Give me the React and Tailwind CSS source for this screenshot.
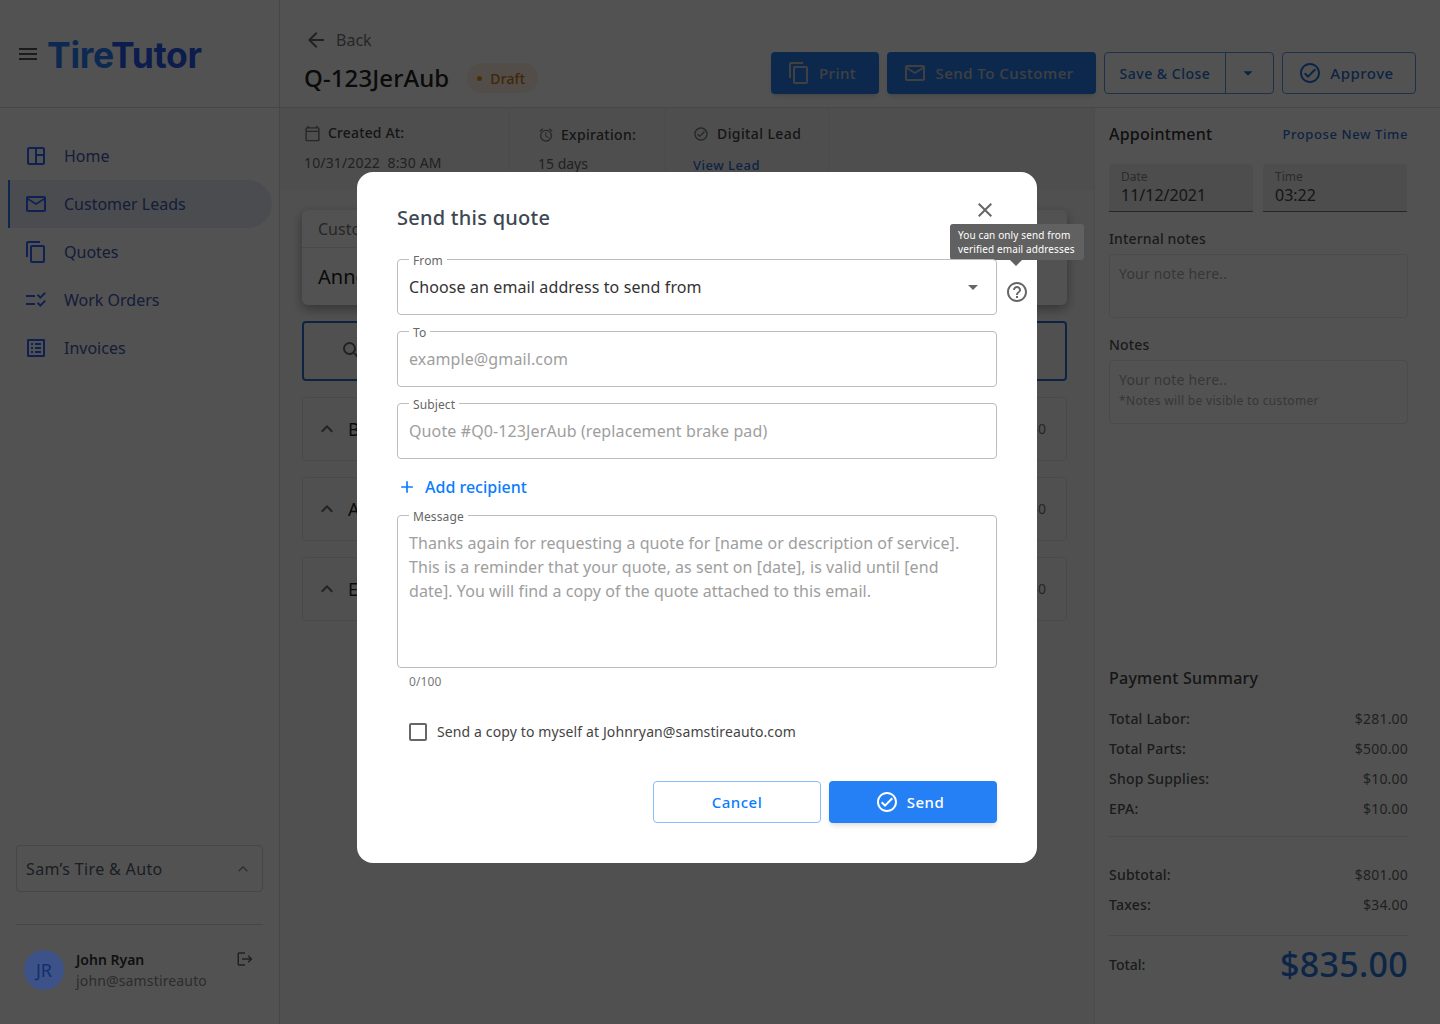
import React from 'react';
import {
  MdMenu, MdOutlineSpaceDashboard, MdMailOutline, MdContentCopy, MdChecklistRtl, MdOutlineListAlt,
  MdExpandLess, MdLogout, MdArrowBack, MdOutlineCheckCircle, MdArrowDropDown, MdOutlineCalendarToday,
  MdOutlineAlarm, MdSearch, MdClose, MdHelpOutline, MdAdd,
} from 'react-icons/md';

const NAV = [
  { label: 'Home', Icon: MdOutlineSpaceDashboard },
  { label: 'Customer Leads', Icon: MdMailOutline, active: true },
  { label: 'Quotes', Icon: MdContentCopy },
  { label: 'Work Orders', Icon: MdChecklistRtl },
  { label: 'Invoices', Icon: MdOutlineListAlt },
];

const CHARGES = [['Total Labor:', '$281.00'], ['Total Parts:', '$500.00'], ['Shop Supplies:', '$10.00'], ['EPA:', '$10.00']];
const TOTALS = [['Subtotal:', '$801.00'], ['Taxes:', '$34.00']];

function Sidebar() {
  return (
    <aside className="w-[280px] shrink-0 border-r border-[#d8d8d8] flex flex-col">
      <div className="h-[108px] shrink-0 border-b border-[#d8d8d8] flex items-center pl-[16px] gap-[7px]">
        <MdMenu size={24} className="text-[#555]" />
        <div className="mt-[4px] font-['Inter',sans-serif] font-bold text-[35.5px] tracking-[-0.3px] leading-none text-[#2a80ff]">
          Tire<span className="text-[#2458f0]">Tutor</span>
        </div>
      </div>
      <nav className="mt-[24px] flex flex-col">
        {NAV.map(({ label, Icon, active }) => (
          <div key={label} className={`ml-[8px] mr-[7px] h-[48px] flex items-center pl-[14px] gap-[16px] text-[16px] text-[#3f5ab0] ${active ? 'bg-[#e9edf5] border-l-2 border-[#2a78f0] rounded-r-full' : 'border-l-2 border-transparent'}`}>
            <Icon size={24} className="text-[#2d68ff]" />
            {label}
          </div>
        ))}
      </nav>
      <div className="mt-auto px-[16px]">
        <div className="h-[47px] border border-[#d8d8d8] rounded flex items-center justify-between px-[9px] text-[16px] tracking-[0.35px] text-[#52606d]">
          Sam’s Tire &amp; Auto
          <MdExpandLess size={20} className="text-[#9a9a9a]" />
        </div>
        <div className="mt-[32px] border-t border-[#d8d8d8] h-[100px] flex items-start pt-[25px] pl-[8px] pr-[9px]">
          <div className="relative z-10 w-[40px] h-[40px] rounded-full bg-[#3d5288] flex items-center justify-center text-[18px] text-[#132f6c]">JR</div>
          <div className="ml-[12px] flex-1">
            <div className="text-[14px] leading-[20px] font-semibold text-[#333]">John Ryan</div>
            <div className="text-[14px] leading-[20px] mt-[1px] tracking-[0.15px] text-[#8a8a8a]">john@samstireauto</div>
          </div>
          <MdLogout size={18} className="text-[#666]" />
        </div>
      </div>
    </aside>
  );
}

function Header() {
  return (
    <header className="h-[108px] shrink-0 border-b border-[#e0e0e0] flex justify-between pl-[24px] pr-[24px]">
      <div>
        <div className="mt-[28px] flex items-center gap-[8px] text-[16px] leading-[24px] text-[#777]">
          <MdArrowBack size={24} className="text-[#666]" /> Back
        </div>
        <div className="mt-[8px] flex items-center gap-[18px]">
          <h1 className="text-[24px] leading-[36px] font-medium tracking-[0.1px] text-[#222]">Q-123JerAub</h1>
          <span className="h-[30px] w-[71px] pl-[10px] rounded-full bg-[#fdf0df] flex items-center gap-[8px] text-[14px] font-medium tracking-[0.1px] text-[#c77a1a]">
            <span className="w-[5px] h-[5px] rounded-full bg-[#e8930f]" /> Draft
          </span>
        </div>
      </div>
      <div className="mt-[52px] flex gap-[8px] h-[42px] text-[15px] font-medium tracking-[0.5px]">
        <button className="w-[108px] pr-[7px] rounded bg-[#2680f0] shadow-md flex items-center justify-center gap-[8px] text-[#c8c8c8]">
          <MdContentCopy size={24} /> Print
        </button>
        <button className="w-[209px] pr-[6px] rounded bg-[#2680f0] shadow-md flex items-center justify-center gap-[8px] text-[#c8c8c8]">
          <MdMailOutline size={24} /> Send To Customer
        </button>
        <div className="w-[170px] rounded border border-[#5f9ae8] flex text-[#2a6fd0] text-[14px]">
          <div className="w-[121px] border-r border-[#5f9ae8] flex items-center justify-center">Save &amp; Close</div>
          <div className="flex-1 pr-[3px] flex items-center justify-center"><MdArrowDropDown size={22} /></div>
        </div>
        <button className="w-[134px] pr-[6px] rounded border border-[#5f9ae8] flex items-center justify-center gap-[8px] text-[#2a6fd0]">
          <MdOutlineCheckCircle size={24} /> Approve
        </button>
      </div>
    </header>
  );
}

function InfoStrip() {
  return (
    <div className="h-[82px] bg-[#f3f3f3] flex text-[14px] text-[#666] overflow-hidden">
      <div className="w-[230px] pl-[24px] pt-[14px] border-r border-[#e6e6e6]">
        <div className="flex items-center gap-[7px] font-medium tracking-[0.15px] text-[#444] leading-[22px]"><MdOutlineCalendarToday size={17} className="text-[#777]" /> Created At:</div>
        <div className="mt-[8px] leading-[22px] tracking-[0.15px]">10/31/2022&nbsp; 8:30 AM</div>
      </div>
      <div className="w-[156px] pl-[28px] pt-[16px] border-r border-[#e6e6e6]">
        <div className="flex items-center gap-[7px] font-medium tracking-[0.3px] text-[#444] leading-[22px]"><MdOutlineAlarm size={16} className="text-[#777]" /> Expiration:</div>
        <div className="mt-[7px] leading-[22px]">15 days</div>
      </div>
      <div className="w-[163px] pl-[27px] pt-[15px] border-r border-[#e6e6e6]">
        <div className="flex items-center gap-[8px] font-medium tracking-[0.4px] text-[#444] leading-[22px]"><MdOutlineCheckCircle size={16} className="text-[#777]" /> Digital Lead</div>
        <div className="mt-[9px] leading-[22px] text-[13px] font-medium tracking-[0.5px] text-[#2a6fd0]">View Lead</div>
      </div>
    </div>
  );
}

function Middle() {
  return (
    <div className="w-[814px] shrink-0 bg-[#f9f9f9]">
      <InfoStrip />
      <div className="pl-[22px] pr-[27px] pt-[20px] flex flex-col gap-[16px]">
        <div className="h-[95px] rounded-md bg-white shadow-[0_4px_12px_rgba(0,0,0,0.35)]">
          <div className="h-[38px] border-b border-[#e4e4e4] pl-[16px] flex items-center text-[16px] text-[#777]">Customer</div>
          <div className="h-[57px] pl-[16px] flex items-center text-[20px] text-[#222]">Anne</div>
        </div>
        <div className="h-[60px] rounded border-2 border-[#2a6fd0] pl-[36px] flex items-center"><MdSearch size={24} className="text-[#666]" /></div>
        {['Brakes', 'Axle', 'Engine'].map(name => (
          <div key={name} className="h-[64px] rounded border border-[#e4e4e4] pl-[12px] pr-[20px] flex items-center justify-between text-[14px] text-[#777]">
            <div className="flex items-center gap-[9px] text-[18px] text-[#222]">
              <MdExpandLess size={24} className="text-[#666]" /> {name}
            </div>
            <span className="mb-[2px]">$0</span>
          </div>
        ))}
      </div>
    </div>
  );
}

function RightPanel() {
  return (
    <div className="flex-1 border-l border-[#ececec] pl-[14px] pr-[32px] flex flex-col text-[#666]">
      <div className="mt-[14px] flex items-center justify-between h-[24px]">
        <h2 className="text-[16px] font-medium tracking-[0.2px] text-[#333]">Appointment</h2>
        <a className="mt-[2px] text-[13px] font-medium tracking-[0.6px] text-[#2a6fd0]">Propose New Time</a>
      </div>
      <div className="mt-[18px] flex gap-[10px]">
        {[['Date', '11/12/2021'], ['Time', '03:22']].map(([label, value]) => (
          <div key={label} className="w-[144px] h-[48px] rounded-t bg-[#eeeeee] border-b border-[#777] pl-[12px] pt-[6px]">
            <div className="text-[12px] leading-[14px] text-[#888]">{label}</div>
            <div className="text-[16px] leading-[22px] text-[#444]">{value}</div>
          </div>
        ))}
      </div>
      <div className="mt-[17px] text-[14px] leading-[20px] font-medium tracking-[0.15px] text-[#555]">Internal notes</div>
      <div className="mt-[5px] h-[64px] rounded border border-[#e8e8e8] pl-[9px] pt-[8px] text-[14px] leading-[22px] tracking-[0.2px] text-[#aaa]">Your note here..</div>
      <div className="mt-[17px] text-[14px] leading-[20px] font-medium tracking-[0.15px] text-[#555]">Notes</div>
      <div className="mt-[5px] h-[64px] rounded border border-[#e8e8e8] pl-[9px] pt-[8px] text-[#aaa]">
        <div className="text-[14px] leading-[22px] tracking-[0.2px]">Your note here..</div>
        <div className="mt-[2px] text-[12px] leading-[16px] tracking-[0.33px]">*Notes will be visible to customer</div>
      </div>
      <div className="mt-auto pb-[38px]">
        <h2 className="text-[16px] leading-[24px] font-medium tracking-[0.25px] text-[#444]">Payment Summary</h2>
        <div className="mt-[18px] flex flex-col gap-[8px] text-[14px] leading-[22px] tracking-[0.2px]">
          {CHARGES.map(([label, value]) => (
            <div key={label} className="flex justify-between"><span className="font-medium text-[#555]">{label}</span><span>{value}</span></div>
          ))}
        </div>
        <div className="mt-[16px] pt-[27px] border-t border-[#e4e4e4] flex flex-col gap-[8px] text-[14px] leading-[22px] tracking-[0.2px]">
          {TOTALS.map(([label, value]) => (
            <div key={label} className="flex justify-between"><span className="font-medium text-[#555]">{label}</span><span>{value}</span></div>
          ))}
        </div>
        <div className="mt-[19px] pt-[6px] border-t border-[#e4e4e4] flex justify-between items-center">
          <span className="text-[14px] font-medium text-[#555]">Total:</span>
          <span className="text-[34px] leading-[44px] font-medium tracking-[0.3px] text-[#2a78e0]">$835.00</span>
        </div>
      </div>
    </div>
  );
}

function Field({ label, className, children }) {
  return (
    <div className={`relative w-[600px] rounded border border-[#bdbdbd] px-[11px] text-[16px] tracking-[0.11px] ${className}`}>
      <span className="absolute -top-[5px] left-[11px] bg-white px-[4px] text-[12px] leading-[12px] text-[#666]">{label}</span>
      {children}
    </div>
  );
}

function SendModal() {
  return (
    <div className="absolute inset-0 bg-black/[0.68] pl-[357px] pt-[172px]">
      <div className="relative w-[680px] h-[691px] rounded-2xl bg-white pl-[40px] pt-[30px]">
        <h2 className="text-[20px] leading-[32px] font-medium tracking-[0.25px] text-[#3d4852]">Send this quote</h2>
        <MdClose size={24} className="absolute top-[26px] left-[616px] text-[#666]" />

        <div className="absolute left-[593px] top-[52px] w-[134px] h-[36px] rounded-[3px] bg-[#616161] px-[8px] pt-[4px] text-[10px] leading-[14px] tracking-[0.12px] text-white whitespace-nowrap">
          You can only send from<br />verified email addresses
          <div className="absolute left-[60px] top-[36px] w-0 h-0 border-x-[6px] border-x-transparent border-t-[6px] border-t-[#616161]" />
        </div>
        <MdHelpOutline size={24} className="absolute left-[648px] top-[108px] text-[#666]" />

        <div className="mt-[25px] flex flex-col gap-[16px]">
          <Field label="From" className="h-[56px] flex items-center justify-between text-[#333]">
            <span>Choose an email address to send from</span>
            <MdArrowDropDown size={24} className="text-[#666]" />
          </Field>
          <Field label="To" className="h-[56px] flex items-center text-[#9e9e9e]"><span>example@gmail.com</span></Field>
          <Field label="Subject" className="h-[56px] flex items-center text-[#9e9e9e]"><span>Quote #Q0-123JerAub (replacement brake pad)</span></Field>
        </div>

        <div className="mt-[16px] h-[24px] flex items-center gap-[8px] text-[16px] font-medium text-[#0a7cff]">
          <MdAdd size={20} /> Add recipient
        </div>

        <Field label="Message" className="mt-[16px] h-[153px] pt-[15px] leading-[24px] text-[#9e9e9e]">
          <p className="tracking-[0.07px]">Thanks again for requesting a quote for [name or description of service]. This is a reminder that your quote, as sent on [date], is valid until [end date]. You will find a copy of the quote attached to this email.</p>
        </Field>
        <div className="mt-[6px] pl-[12px] text-[12px] leading-[16px] tracking-[0.1px] text-[#777]">0/100</div>

        <div className="mt-[31px] pl-[12px] flex items-center gap-[10px] text-[14px] leading-[22px] tracking-[0.12px] text-[#444]">
          <span className="w-[18px] h-[18px] rounded-[2px] border-2 border-[#666]" />
          Send a copy to myself at Johnryan@samstireauto.com
        </div>

        <div className="mt-[38px] w-[600px] flex justify-end gap-[8px] text-[15px] font-medium tracking-[0.5px]">
          <button className="w-[168px] h-[42px] rounded border border-[#8cbcf5] text-[#0a7cff]">Cancel</button>
          <button className="w-[168px] h-[42px] pr-[7px] rounded bg-[#2680f5] shadow-md text-white flex items-center justify-center gap-[8px]">
            <MdOutlineCheckCircle size={24} /> Send
          </button>
        </div>
      </div>
    </div>
  );
}

export default function App() {
  return (
    <div className="relative w-[1440px] h-[1024px] overflow-hidden bg-white font-['Noto_Sans',sans-serif]">
      <div className="flex h-full">
        <Sidebar />
        <main className="flex-1 flex flex-col min-w-0">
          <Header />
          <div className="flex flex-1 min-h-0">
            <Middle />
            <RightPanel />
          </div>
        </main>
      </div>
      <SendModal />
    </div>
  );
}
